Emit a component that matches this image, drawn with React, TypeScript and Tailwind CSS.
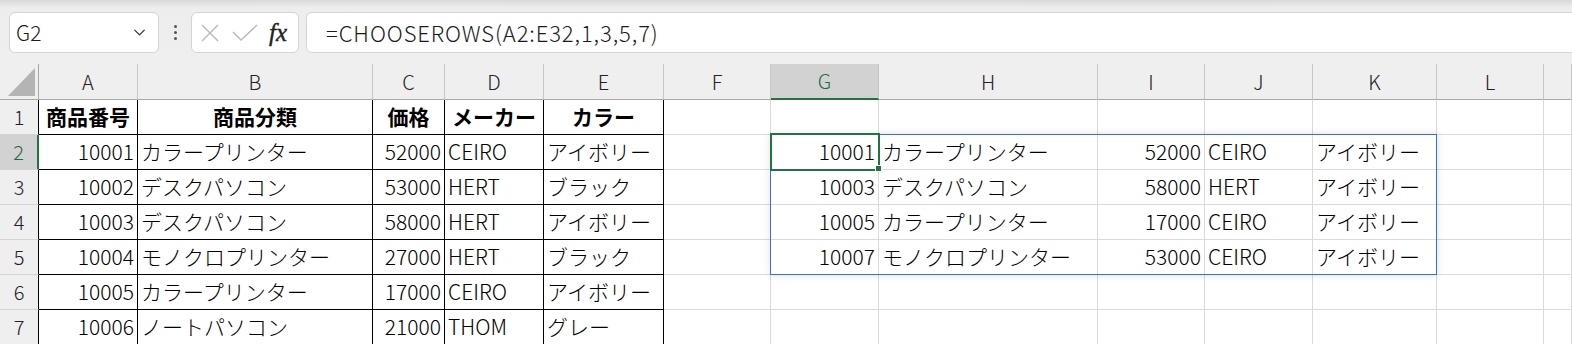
import { ChevronDown } from 'lucide-react'

type Align = 'l' | 'r' | 'c'
type Cell = { v: string; a: Align; b?: boolean }

const FONT = { fontFamily: '"Noto Sans CJK JP", "Noto Sans", sans-serif' }

const colLetters = ['A', 'B', 'C', 'D', 'E', 'F', 'G', 'H', 'I', 'J', 'K', 'L', '']

const tableRows: string[][] = [
  ['10001', 'カラープリンター', '52000', 'CEIRO', 'アイボリー'],
  ['10002', 'デスクパソコン', '53000', 'HERT', 'ブラック'],
  ['10003', 'デスクパソコン', '58000', 'HERT', 'アイボリー'],
  ['10004', 'モノクロプリンター', '27000', 'HERT', 'ブラック'],
  ['10005', 'カラープリンター', '17000', 'CEIRO', 'アイボリー'],
  ['10006', 'ノートパソコン', '21000', 'THOM', 'グレー'],
]

const spillRows: string[][] = [
  ['10001', 'カラープリンター', '52000', 'CEIRO', 'アイボリー'],
  ['10003', 'デスクパソコン', '58000', 'HERT', 'アイボリー'],
  ['10005', 'カラープリンター', '17000', 'CEIRO', 'アイボリー'],
  ['10007', 'モノクロプリンター', '53000', 'CEIRO', 'アイボリー'],
]

const aligns: Align[] = ['r', 'l', 'r', 'l', 'l']

// build a 7 x 13 sheet (A..M)
const sheet: (Cell | null)[][] = Array.from({ length: 7 }, () => Array(13).fill(null))
;['商品番号', '商品分類', '価格', 'メーカー', 'カラー'].forEach((v, i) => {
  sheet[0][i] = { v, a: 'c', b: true }
})
tableRows.forEach((r, ri) => r.forEach((v, ci) => (sheet[ri + 1][ci] = { v, a: aligns[ci] })))
spillRows.forEach((r, ri) => r.forEach((v, ci) => (sheet[ri + 1][ci + 6] = { v, a: aligns[ci] })))

const Toolbar = () => (
  <div className="flex h-[64px] items-start bg-gradient-to-b from-[#d9d9d9] via-[#ededed] via-[12%] to-[#efefef] pt-[12px] pl-[9px]">
    <div className="flex h-[41px] w-[150px] items-center justify-between rounded-[6px] border border-[#d4d4d4] bg-white pr-[9px] pl-[6px]">
      <span className="text-[21px] font-light text-[#1a1a1a]" style={FONT}>G2</span>
      <ChevronDown size={19} strokeWidth={1.6} className="text-[#333]" />
    </div>
    <div className="flex h-[41px] w-[32px] flex-col items-center justify-center gap-[3px]">
      <span className="h-[3px] w-[3px] rounded-full bg-[#555]" />
      <span className="h-[3px] w-[3px] rounded-full bg-[#555]" />
      <span className="h-[3px] w-[3px] rounded-full bg-[#555]" />
    </div>
    <div className="flex h-[41px] w-[108px] items-center rounded-[6px] border border-[#d4d4d4] bg-white pl-[9px]">
      <svg width="18" height="18" viewBox="0 0 18 18" className="stroke-[#b8b8b8]" fill="none" strokeWidth="1.4">
        <path d="M1 1 L17 17 M17 1 L1 17" />
      </svg>
      <svg width="26" height="18" viewBox="0 0 26 18" className="ml-[13px] stroke-[#b8b8b8]" fill="none" strokeWidth="1.4">
        <path d="M1 8 L9 16 L25 1" />
      </svg>
      <span
        className="ml-[11px] text-[25px] italic leading-none text-[#222] [-webkit-text-stroke:0.4px_#222]"
        style={{ fontFamily: '"Liberation Serif", serif' }}
      >
        fx
      </span>
    </div>
    <div className="-mr-[12px] ml-[7px] flex h-[41px] flex-1 items-center rounded-[6px] border border-[#d4d4d4] bg-white pl-[19px]">
      <span className="text-[22px] font-light tracking-[0.9px] text-[#1a1a1a]" style={FONT}>
        =CHOOSEROWS(A2:E32,1,3,5,7)
      </span>
    </div>
  </div>
)

export default function App() {
  return (
    <div className="h-[344px] w-[1572px] overflow-hidden bg-white font-light" style={FONT}>
      <Toolbar />
      <div className="relative">
        <div className="grid grid-cols-[39px_99px_235px_72px_99px_120px_107px_108px_219px_107px_108px_124px_107px_1fr]">
          {/* corner */}
          <div className="relative h-[36px] border-r border-b border-[#a8a8a8] bg-[#efefef]">
            <svg className="absolute top-[4px] left-[8px]" width="27" height="28" viewBox="0 0 27 28">
              <path d="M27 0 L27 28 L0 28 Z" fill="#b4b4b4" />
            </svg>
          </div>
          {colLetters.map((c, i) =>
            c === 'G' ? (
              <div
                key={i}
                className="flex h-[36px] items-center justify-center border-r border-b-2 border-r-[#c6c6c6] border-b-[#217346] bg-[#d2d2d2] text-[20px] text-[#1d6b3f]"
              >
                {c}
              </div>
            ) : (
              <div
                key={i}
                className="flex h-[36px] items-center justify-center border-r border-b border-r-[#c6c6c6] border-b-[#a8a8a8] bg-[#efefef] text-[20px] text-[#222]"
              >
                {c}
              </div>
            ),
          )}

          {sheet.map((row, ri) => (
            <Row key={ri} index={ri} row={row} />
          ))}
        </div>

        {/* spill range */}
        <div className="pointer-events-none absolute top-[70px] left-[770px] h-[141px] w-[667px] border border-[#3c6fce] shadow-[0_0_8px_rgba(0,0,0,0.12)]" />
        {/* active cell */}
        <div className="pointer-events-none absolute top-[69px] left-[770px] h-[38px] w-[110px] border-2 border-[#217346]" />
        <div className="pointer-events-none absolute top-[101px] left-[875px] h-[7px] w-[7px] border border-white bg-[#217346]" />
      </div>
    </div>
  )
}

function Row({ index, row }: { index: number; row: (Cell | null)[] }) {
  const active = index === 1
  return (
    <>
      <div
        className={
          active
            ? 'flex h-[35px] items-center justify-center border-r-2 border-b border-r-[#217346] border-b-[#d4d4d4] bg-[#d2d2d2] text-[20px] text-[#1d6b3f]'
            : 'flex h-[35px] items-center justify-center border-r border-b border-r-black border-b-[#d4d4d4] bg-[#efefef] text-[20px] text-[#222]'
        }
      >
        {index + 1}
      </div>
      {row.map((cell, ci) => {
        const inTable = ci < 5
        const border = inTable ? 'border-black' : 'border-[#dadada]'
        const align =
          cell?.a === 'r' ? 'justify-end pr-[3px]' : cell?.a === 'c' ? 'justify-center' : 'justify-start pl-[3px]'
        return (
          <div
            key={ci}
            className={`flex h-[35px] items-center overflow-visible border-r border-b whitespace-nowrap text-[21px] text-black ${border} ${align} ${cell?.b ? 'font-bold' : ''}`}
          >
            {cell?.v}
          </div>
        )
      })}
    </>
  )
}
